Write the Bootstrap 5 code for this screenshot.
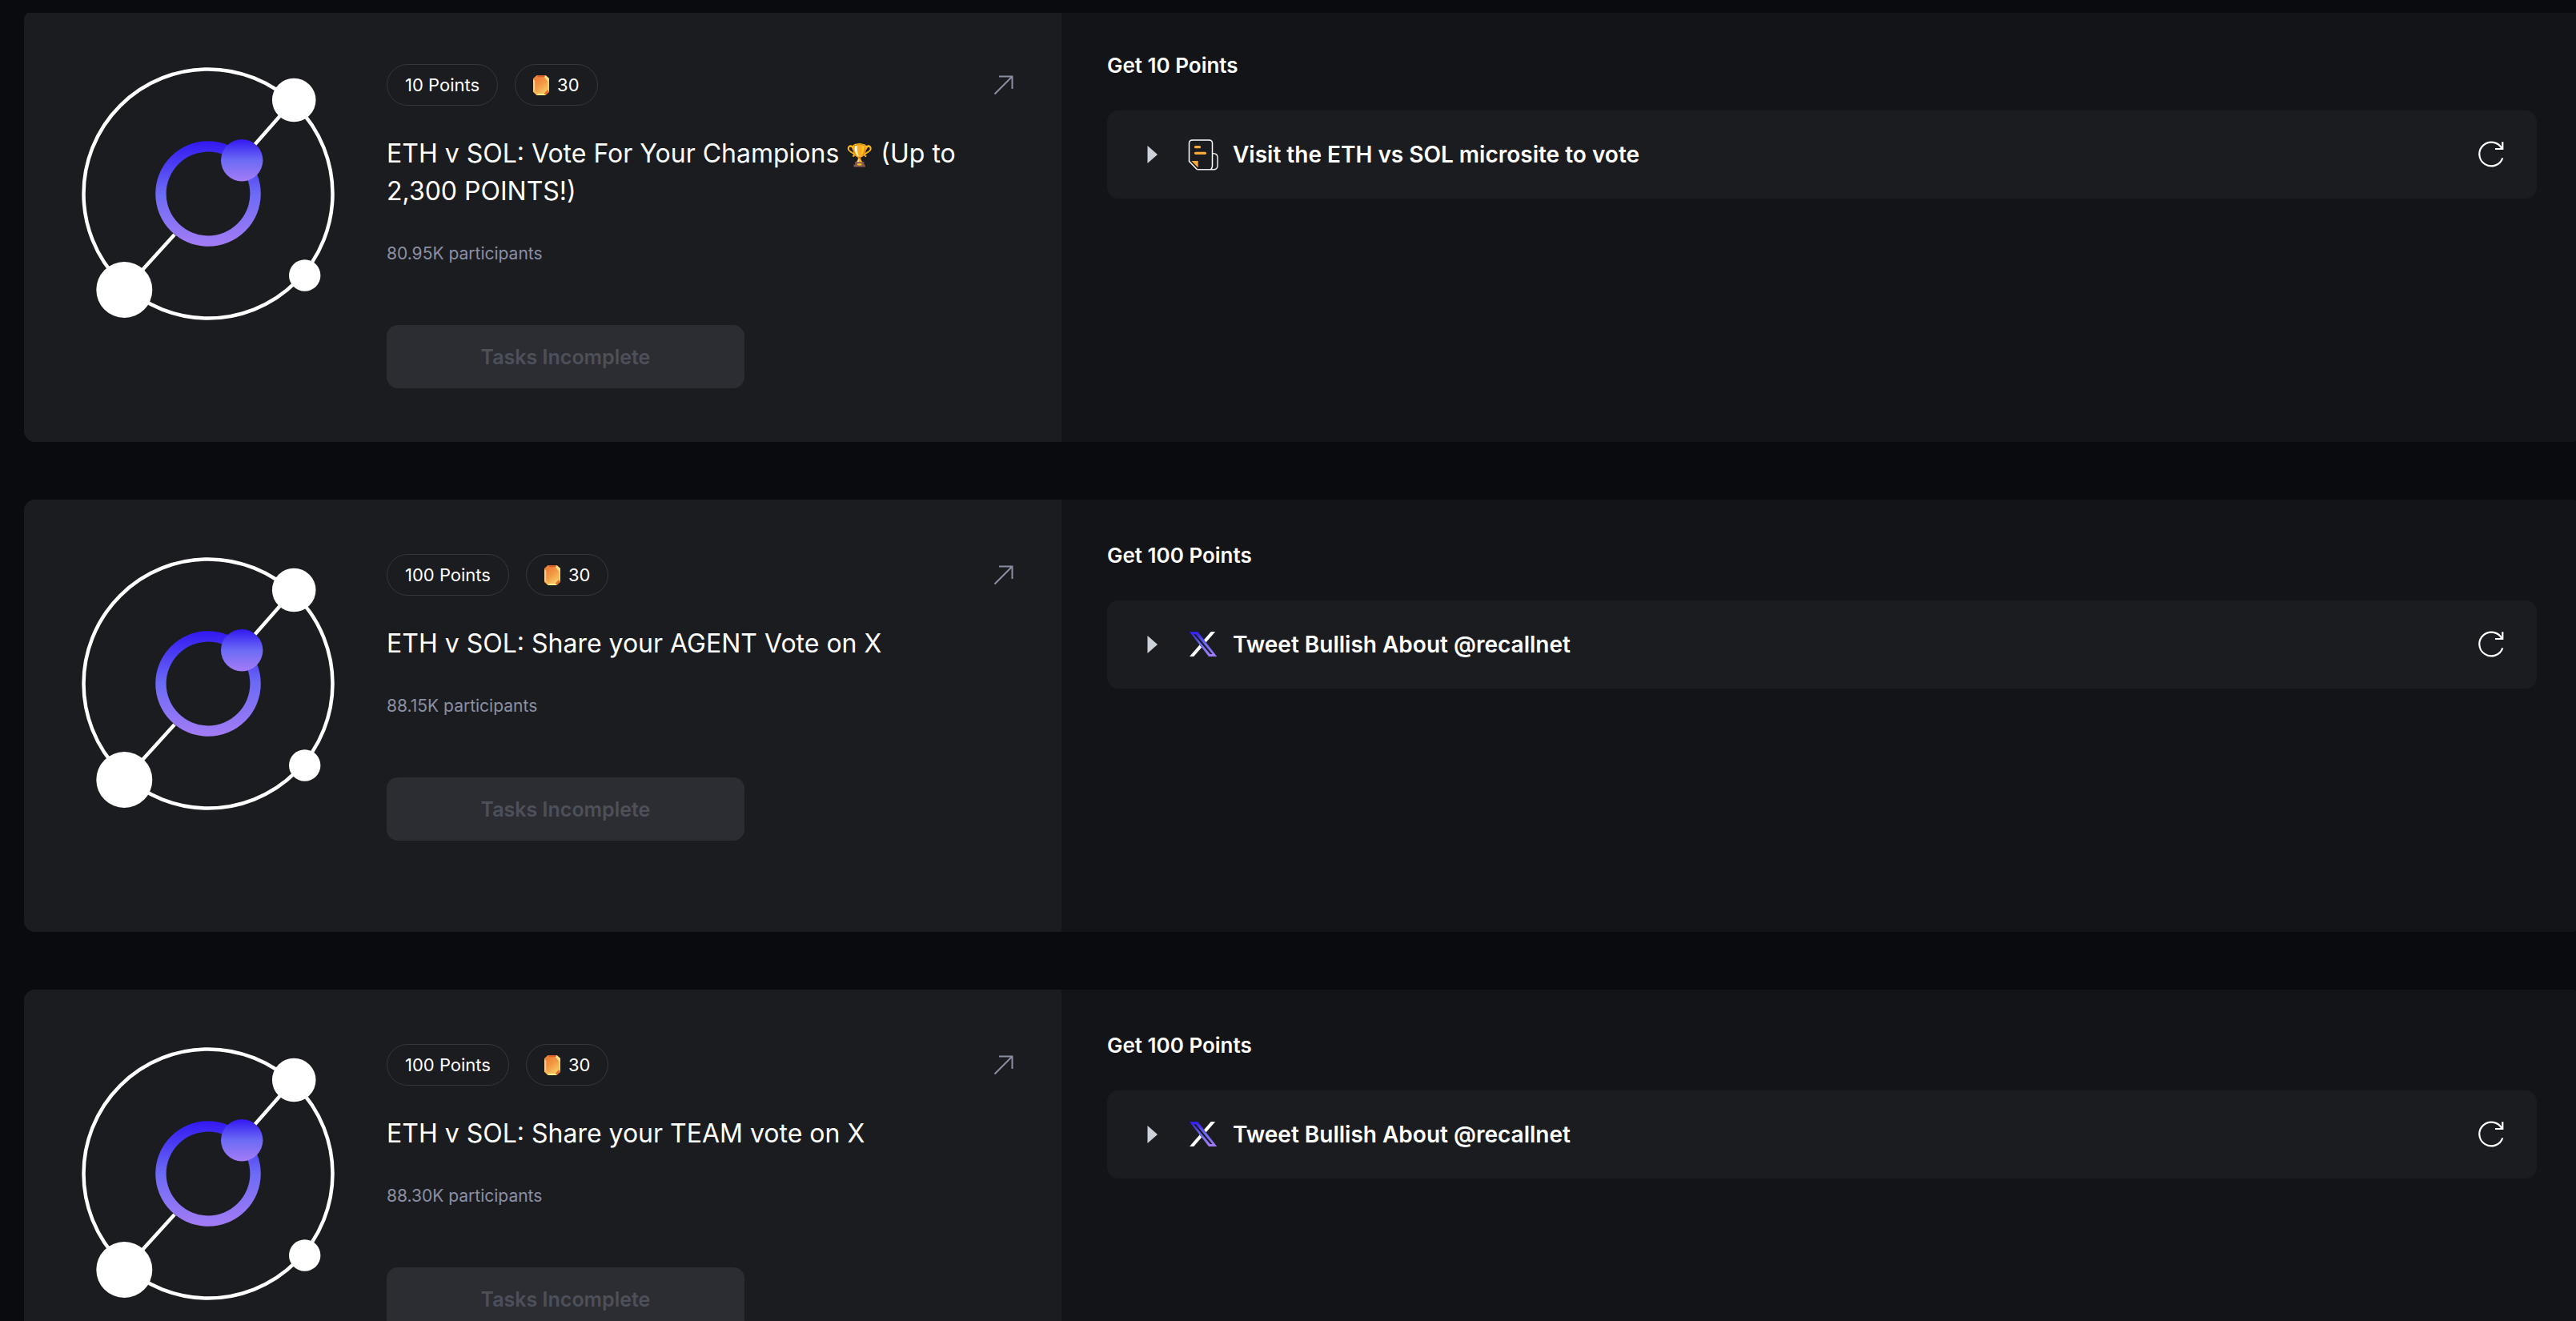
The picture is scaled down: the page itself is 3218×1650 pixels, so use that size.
<!DOCTYPE html>
<html lang="en" data-bs-theme="dark">
<head>
<meta charset="utf-8">
<meta name="viewport" content="width=device-width, initial-scale=1">
<title>Quests</title>
<link href="https://cdn.jsdelivr.net/npm/bootstrap@5.3.0/dist/css/bootstrap.min.css" rel="stylesheet">
<style>
  body { background: #0a0b0f; color: #fff; font-family: Inter, "Liberation Sans", sans-serif; overflow-x: hidden; }
  .top-strip { height: 16px; background: #0a0b0f; }
  .quest-list { padding: 12px 0 72px 30px; margin-right: -8px; gap: 72px; }
  .quest { min-height: 540px; border-radius: 14px; overflow: hidden; background: #131418; }
  .quest-info { width: 40.55%; background: #1b1c20; padding: 56px; gap: 49px; }
  .quest-tasks { padding: 54px 57px; }
  .quest-logo { width: 348px; height: 348px; }
  .quest-body { padding-top: 12px; }
  .quest-meta { gap: 21px; margin-bottom: 36px; }
  .pill { height: 52px; padding: 0 22px; gap: 10px; border: 1px solid #36373d; font-size: 22px; line-height: 32px; }
  .open-link { color: #8b8fa3; }
  .quest-title { font-size: 32px; line-height: 47px; font-weight: 400; margin: 0 0 39px; }
  .trophy { font-size: 27px; line-height: 1; }
  .people { font-size: 21px; line-height: 32px; color: #8b8fa3; margin-bottom: 73px; }
  .claim, .claim:disabled { width: 447px; max-width: 100%; height: 79px; border: 0; border-radius: 14px; background: #2c2d32; color: #4c505a; opacity: 1; font-size: 25px; line-height: 32px; font-weight: 600; }
  .reward { font-size: 26px; line-height: 32px; font-weight: 600; margin-bottom: 40px; }
  .task { height: 110px; padding: 0 40px 0 50px; border-radius: 14px; background: #1b1c20; }
  .task-open { border: 0; padding: 0; color: #fff; font-size: 28px; line-height: 36px; font-weight: 600; text-align: left; }
  .caret { margin-right: 37px; }
  .task-icon { margin-right: 17px; }
  .btn.task-open:hover, .task-reload:hover { color: #fff; }
  .task-reload { border: 0; padding: 0; color: #fff; line-height: 1; }
</style>
<script src="https://cdn.jsdelivr.net/npm/bootstrap@5.3.0/dist/js/bootstrap.bundle.min.js"></script>
</head>
<body>

<!-- shared drawings -->
<svg width="0" height="0" class="position-absolute" aria-hidden="true">
  <defs>
    <linearGradient id="violet" x1="0" y1="0" x2="0" y2="1">
      <stop offset="0" stop-color="#3218f2"/><stop offset=".5" stop-color="#6c6bf5"/><stop offset="1" stop-color="#a47cf6"/>
    </linearGradient>
    <linearGradient id="gemFill" x1="0" y1="0" x2=".6" y2="1">
      <stop offset="0" stop-color="#ee7a35"/><stop offset=".55" stop-color="#f39a45"/><stop offset="1" stop-color="#f8c460"/>
    </linearGradient>
    <symbol id="orbit" viewBox="0 0 348 348">
      <circle cx="174" cy="174" r="155.5" fill="none" stroke="#fff" stroke-width="4.5"/>
      <path d="M69.3 294 L132 225 M231 114 L281.2 57" stroke="#fff" stroke-width="4.5"/>
      <circle cx="281.2" cy="57" r="27.3" fill="#fff"/>
      <circle cx="69.3" cy="294" r="35" fill="#fff"/>
      <circle cx="294.7" cy="276" r="19.7" fill="#fff"/>
      <path fill="url(#violet)" fill-rule="evenodd" d="M174 108.2a65.8 65.8 0 1 1 0 131.6a65.8 65.8 0 1 1 0-131.6zm0 13.4a52.4 52.4 0 1 0 0 104.8a52.4 52.4 0 1 0 0-104.8z"/>
      <circle cx="216.2" cy="132.3" r="26.2" fill="url(#violet)"/>
    </symbol>
    <symbol id="gem" viewBox="0 0 20 25">
      <path d="M4.500 0h11L20 4v17l-4.500 4h-11L0 21V4z" fill="#e9843c"/>
      <path d="M4.500 0h11l-2 2.500h-7z" fill="#d9602c"/>
      <path d="M0 5l2.500 2v12L0 21z" fill="#f8cf9a"/>
      <path d="M20 5l-2.500 2v12L20 21z" fill="#f6cf62"/>
      <path d="M15.500 0L20 4v3l-2.500.5-4-4.500z" fill="#fbe08a"/>
      <path d="M0 20l2.500-2 4 4.500-2 2.500z" fill="#f3b95b"/>
      <path d="M20 20l-2.500-2-4 4.500 2 2.500z" fill="#e2702f"/>
      <path d="M6.500 22.500h7l2 2.500h-11z" fill="#fdf38c"/>
      <path d="M6 2.500h8l3.500 4v12l-3.500 4H6l-3.500-4v-12z" fill="url(#gemFill)"/>
    </symbol>
    <symbol id="arrow" viewBox="0 0 32 32">
      <path d="M4.500 27.500L26.500 5.500M10 5.500h16.500V21" fill="none" stroke="currentColor" stroke-width="2"/>
    </symbol>
    <symbol id="caret" viewBox="0 0 13 22"><path d="M.5 0L13 11 .5 22z" fill="#cdd1da"/></symbol>
    <symbol id="page" viewBox="0 0 40 40">
      <g fill="none" stroke-width="1.500">
        <path stroke="#e8e8ea" d="M31.500 18.700h1.500q5 .3 5 5v10q0 5-5 5H12.500"/>
        <path stroke="#fff" d="M12.500 38.700L2.500 28.500V6Q2.500 2 6.500 2h21q4 0 4 4v28q0 3-2 4.700"/>
      </g>
      <path d="M10.500 10.700h5M10.500 18.300h12" stroke="#f6a93b" stroke-width="3.300" stroke-linecap="round"/>
      <path d="M5.300 28h8.400v8.400z" fill="#f6a93b"/>
    </symbol>
    <symbol id="xlogo" viewBox="0 0 40 40">
      <path d="M29.800 4h5.400L8.300 35H3z" fill="#fff"/>
      <path d="M2.900 4h10.300l24 31H27z" fill="#1b1c20"/>
      <path d="M2.900 4h10.300l24 31H27zM8 7.300L28.800 32h2.700L11 7.300z" fill="url(#violet)" fill-rule="evenodd"/>
    </symbol>
    <symbol id="reload" viewBox="0 0 34 34">
      <path d="M31.300 21.300A14.900 14.900 0 1 1 30.500 9.800M31.300 1.200V10H22" fill="none" stroke="currentColor" stroke-width="2.200"/>
    </symbol>
  </defs>
</svg>

<div class="top-strip fixed-top"></div>

<main class="quest-list d-flex flex-column">

  <article class="quest d-flex">
    <section class="quest-info d-flex flex-shrink-0">
      <svg class="quest-logo flex-shrink-0" role="img" aria-label="Orbit"><use href="#orbit"/></svg>
      <div class="quest-body flex-grow-1">
        <div class="quest-meta d-flex align-items-center">
          <span class="pill rounded-pill d-flex align-items-center">10 Points</span>
          <span class="pill rounded-pill d-flex align-items-center"><svg width="20" height="25" aria-hidden="true"><use href="#gem"/></svg>30</span>
          <a href="#" class="open-link d-flex ms-auto" aria-label="Open quest"><svg width="32" height="32"><use href="#arrow"/></svg></a>
        </div>
        <h2 class="quest-title">ETH v SOL: Vote For Your Champions <span class="trophy">🏆</span> (Up to 2,300 POINTS!)</h2>
        <p class="people">80.95K participants</p>
        <button type="button" class="btn claim" disabled>Tasks Incomplete</button>
      </div>
    </section>
    <section class="quest-tasks flex-grow-1">
      <h3 class="reward">Get 10 Points</h3>
      <div class="task d-flex align-items-center justify-content-between">
        <button type="button" class="btn task-open d-flex align-items-center" aria-expanded="false">
          <svg class="caret" width="13" height="22" aria-hidden="true"><use href="#caret"/></svg>
          <svg class="task-icon" width="40" height="40" aria-hidden="true"><use href="#page"/></svg>
          Visit the ETH vs SOL microsite to vote
        </button>
        <button type="button" class="btn task-reload" aria-label="Refresh"><svg width="34" height="34"><use href="#reload"/></svg></button>
      </div>
    </section>
  </article>

  <article class="quest d-flex">
    <section class="quest-info d-flex flex-shrink-0">
      <svg class="quest-logo flex-shrink-0" role="img" aria-label="Orbit"><use href="#orbit"/></svg>
      <div class="quest-body flex-grow-1">
        <div class="quest-meta d-flex align-items-center">
          <span class="pill rounded-pill d-flex align-items-center">100 Points</span>
          <span class="pill rounded-pill d-flex align-items-center"><svg width="20" height="25" aria-hidden="true"><use href="#gem"/></svg>30</span>
          <a href="#" class="open-link d-flex ms-auto" aria-label="Open quest"><svg width="32" height="32"><use href="#arrow"/></svg></a>
        </div>
        <h2 class="quest-title">ETH v SOL: Share your AGENT Vote on X</h2>
        <p class="people">88.15K participants</p>
        <button type="button" class="btn claim" disabled>Tasks Incomplete</button>
      </div>
    </section>
    <section class="quest-tasks flex-grow-1">
      <h3 class="reward">Get 100 Points</h3>
      <div class="task d-flex align-items-center justify-content-between">
        <button type="button" class="btn task-open d-flex align-items-center" aria-expanded="false">
          <svg class="caret" width="13" height="22" aria-hidden="true"><use href="#caret"/></svg>
          <svg class="task-icon" width="40" height="40" aria-hidden="true"><use href="#xlogo"/></svg>
          Tweet Bullish About @recallnet
        </button>
        <button type="button" class="btn task-reload" aria-label="Refresh"><svg width="34" height="34"><use href="#reload"/></svg></button>
      </div>
    </section>
  </article>

  <article class="quest d-flex">
    <section class="quest-info d-flex flex-shrink-0">
      <svg class="quest-logo flex-shrink-0" role="img" aria-label="Orbit"><use href="#orbit"/></svg>
      <div class="quest-body flex-grow-1">
        <div class="quest-meta d-flex align-items-center">
          <span class="pill rounded-pill d-flex align-items-center">100 Points</span>
          <span class="pill rounded-pill d-flex align-items-center"><svg width="20" height="25" aria-hidden="true"><use href="#gem"/></svg>30</span>
          <a href="#" class="open-link d-flex ms-auto" aria-label="Open quest"><svg width="32" height="32"><use href="#arrow"/></svg></a>
        </div>
        <h2 class="quest-title">ETH v SOL: Share your TEAM vote on X</h2>
        <p class="people">88.30K participants</p>
        <button type="button" class="btn claim" disabled>Tasks Incomplete</button>
      </div>
    </section>
    <section class="quest-tasks flex-grow-1">
      <h3 class="reward">Get 100 Points</h3>
      <div class="task d-flex align-items-center justify-content-between">
        <button type="button" class="btn task-open d-flex align-items-center" aria-expanded="false">
          <svg class="caret" width="13" height="22" aria-hidden="true"><use href="#caret"/></svg>
          <svg class="task-icon" width="40" height="40" aria-hidden="true"><use href="#xlogo"/></svg>
          Tweet Bullish About @recallnet
        </button>
        <button type="button" class="btn task-reload" aria-label="Refresh"><svg width="34" height="34"><use href="#reload"/></svg></button>
      </div>
    </section>
  </article>

</main>
</body>
</html>
